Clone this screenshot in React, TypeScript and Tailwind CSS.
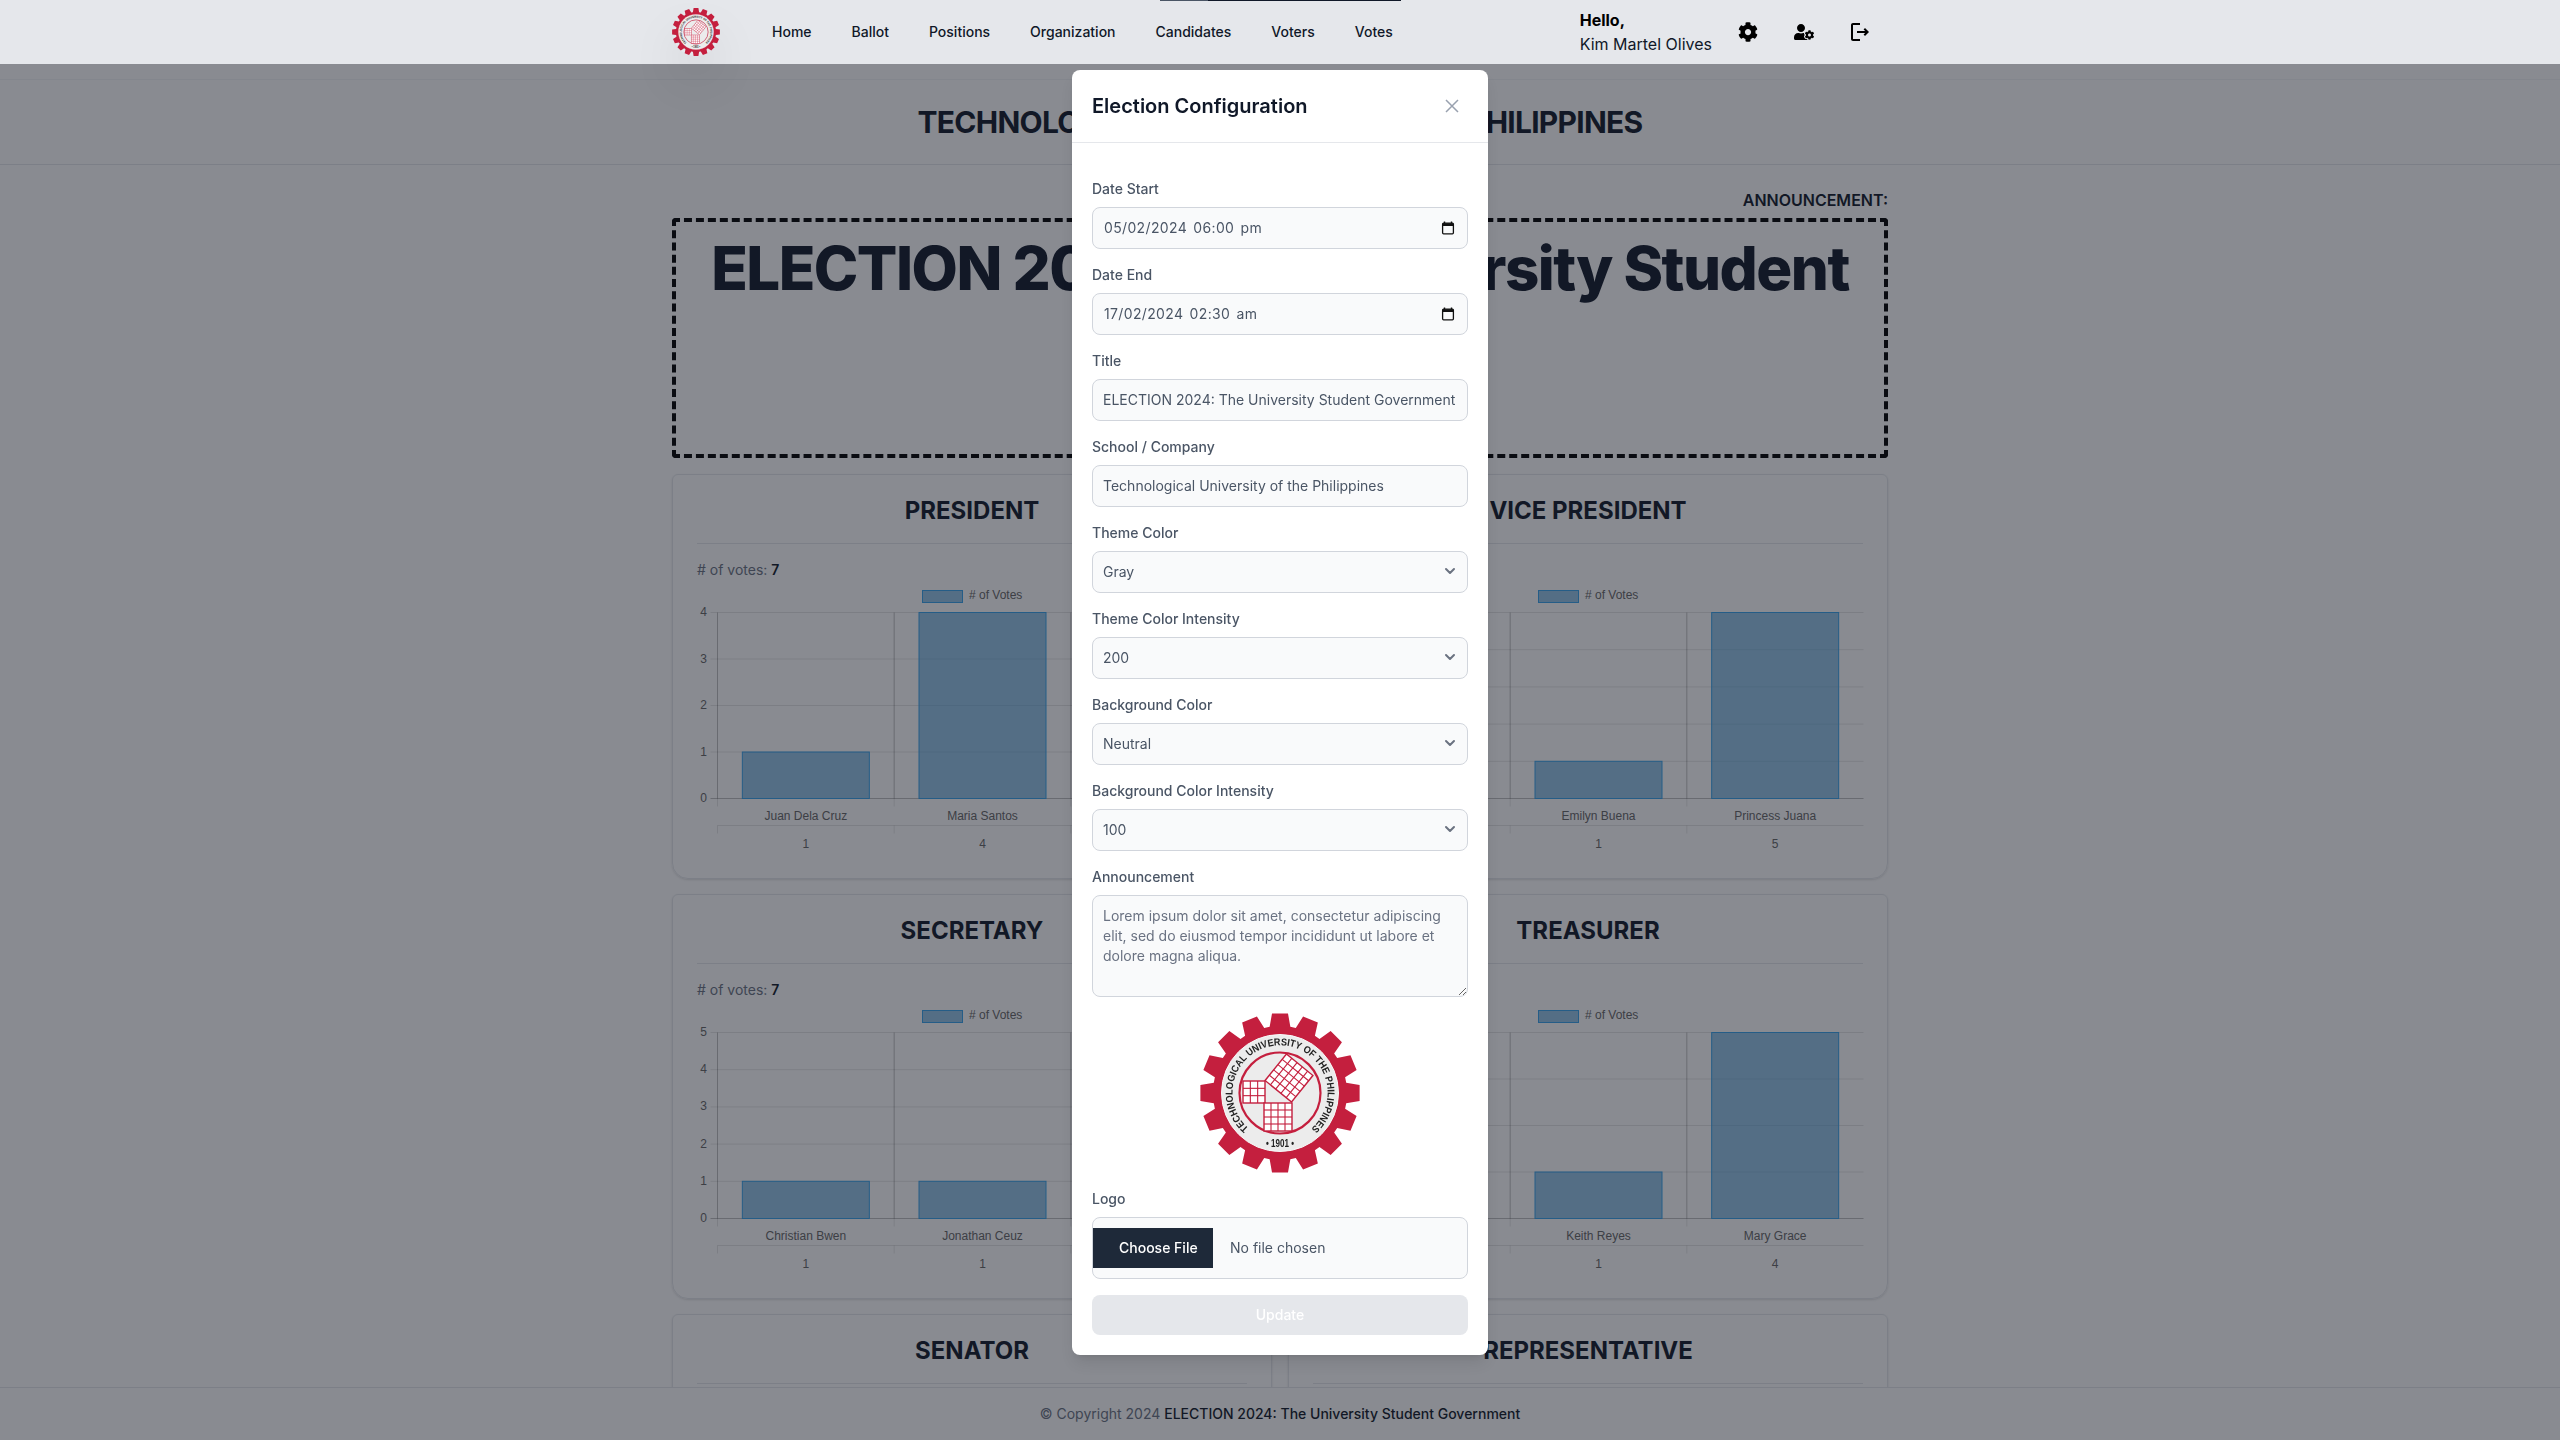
import React from 'react';
import { FaCog, FaUserCog } from 'react-icons/fa';
import { MdOutlineLogout } from 'react-icons/md';

const navLinks = ['Home', 'Ballot', 'Positions', 'Organization', 'Candidates', 'Voters', 'Votes'];

const gearPoints = () => {
  const pts: string[] = [];
  for (let i = 0; i < 16; i++) {
    const a = (i * 22.5 - 90) * (Math.PI / 180);
    const offs = [
      [-0.155, 67],
      [-0.1, 80],
      [0.1, 80],
      [0.155, 67],
    ];
    offs.forEach(([d, r]) => {
      pts.push(`${(80 + r * Math.cos(a + d)).toFixed(2)},${(80 + r * Math.sin(a + d)).toFixed(2)}`);
    });
  }
  return pts.join(' ');
};

const GridSquare = ({ x, y, size, cells, transform }: { x: number; y: number; size: number; cells: number; transform?: string }) => {
  const step = size / cells;
  return (
    <g transform={transform} stroke="#c41f3e" strokeWidth="1.1" fill="#fff">
      <rect x={x} y={y} width={size} height={size} strokeWidth="1.4" />
      {Array.from({ length: cells - 1 }).map((_, i) => (
        <g key={i}>
          <line x1={x + step * (i + 1)} y1={y} x2={x + step * (i + 1)} y2={y + size} />
          <line x1={x} y1={y + step * (i + 1)} x2={x + size} y2={y + step * (i + 1)} />
        </g>
      ))}
    </g>
  );
};

const Logo = ({ id, className }: { id: string; className: string }) => (
  <svg viewBox="0 0 160 160" className={className}>
    <polygon points={gearPoints()} fill="#c41f3e" />
    <circle cx="80" cy="80" r="58.5" fill="#ececec" stroke="#f8f8f8" strokeWidth="1" />
    <circle cx="80" cy="80" r="40.5" fill="#ececec" stroke="#c41f3e" strokeWidth="2.2" />
    <GridSquare x={43} y={68} size={22} cells={3} />
    <GridSquare x={64} y={90} size={28} cells={4} />
    <GridSquare x={72} y={48} size={34} cells={5} transform="rotate(39 89 65)" />
    <defs>
      <path id={id} d="M48.8 115.5 A47.5 47.5 0 1 1 109.5 117" />
    </defs>
    <text className="font-['Liberation_Sans',sans-serif]" fontSize="10" fontWeight="700" fill="#222">
      <textPath href={`#${id}`} textLength="230" lengthAdjust="spacingAndGlyphs">
        TECHNOLOGICAL UNIVERSITY OF THE PHILIPPINES
      </textPath>
    </text>
    <text x="80" y="134" textAnchor="middle" textLength="28" lengthAdjust="spacingAndGlyphs" className="font-['Liberation_Sans',sans-serif]" fontSize="10" fontWeight="700" fill="#222">
      • 1901 •
    </text>
  </svg>
);

type Bar = { name: string; votes: number; col: number };

const VoteChart = ({ max, bars }: { max: number; bars: Bar[] }) => {
  const x0 = 20.5;
  const colW = 176.67;
  const top = 26.5;
  const bottom = 212.5;
  const right = 550.5;
  const rowH = (bottom - top) / max;
  const barW = 127;
  return (
    <svg width="552" height="270" className="mt-1.5 block overflow-visible font-['Liberation_Sans',sans-serif]">
      <rect x="225.5" y="4.5" width="40" height="12" fill="rgba(60,150,210,0.55)" stroke="rgb(54,162,235)" />
      <text x="272" y="13" fontSize="12" fill="#666">
        # of Votes
      </text>
      {Array.from({ length: max + 1 }).map((_, i) => {
        const y = bottom - rowH * i;
        return (
          <g key={i}>
            <line x1={x0 - 7} x2={right} y1={y} y2={y} stroke={i === 0 ? 'rgba(0,0,0,0.25)' : 'rgba(0,0,0,0.1)'} />
            <text x="10" y={y + 3.5} fontSize="12" fill="#666" textAnchor="end">
              {i}
            </text>
          </g>
        );
      })}
      {[0, 1, 2].map((c) => (
        <g key={c}>
          <line x1={x0 + colW * c} x2={x0 + colW * c} y1={top} y2={bottom} stroke="rgba(0,0,0,0.25)" />
          <line x1={x0 + colW * c} x2={x0 + colW * c} y1={bottom} y2={bottom + 8} stroke="rgba(0,0,0,0.1)" />
          <line x1={x0 + colW * c} x2={x0 + colW * c} y1={bottom + 27} y2={bottom + 35} stroke="rgba(0,0,0,0.1)" />
        </g>
      ))}
      <line x1={x0} x2={right} y1={bottom + 27} y2={bottom + 27} stroke="rgba(0,0,0,0.1)" />
      {bars.map((b) => {
        const cx = x0 + colW * b.col + colW / 2;
        const h = rowH * b.votes;
        return (
          <g key={b.name}>
            <rect x={cx - barW / 2} y={bottom - h} width={barW} height={h} fill="rgba(60,150,210,0.55)" stroke="rgb(54,162,235)" />
            <text x={cx} y={bottom + 21} fontSize="12" fill="#666" textAnchor="middle">
              {b.name}
            </text>
            <text x={cx} y={bottom + 49} fontSize="12" fill="#666" textAnchor="middle">
              {b.votes}
            </text>
          </g>
        );
      })}
    </svg>
  );
};

const PositionCard = ({ title, max, bars, side }: { title: string; max?: number; bars?: Bar[]; side: 'left' | 'right' }) => (
  <div className="h-[405px] rounded-t-md rounded-b-2xl border border-gray-200 px-6 pt-5 shadow-sm">
    <div className="border-b border-gray-200 pb-4 text-center">
      <h3 className="text-2xl font-bold text-gray-900">{title}</h3>
    </div>
    {bars && (
      <>
        <p className={`mt-4 text-sm text-gray-500 ${side === 'right' ? 'invisible' : ''}`}>
          # of votes: <span className="font-semibold text-gray-900">7</span>
        </p>
        <VoteChart max={max ?? 4} bars={bars} />
      </>
    )}
  </div>
);

const Label = ({ children }: { children: React.ReactNode }) => (
  <label className="mb-2 block text-sm font-medium text-gray-600">{children}</label>
);

const inputCls =
  'h-[42px] w-full rounded-lg border border-gray-300 bg-gray-50 px-2.5 text-sm text-gray-600 outline-none';

const DateField = ({ label, value }: { label: string; value: string }) => (
  <div>
    <Label>{label}</Label>
    <div className="relative">
      <input readOnly value={value} className={`${inputCls} pb-px pl-[11px] tracking-[0.35px] [word-spacing:2px]`} />
      <svg viewBox="0 0 14 14" className="absolute top-[14px] right-[13px] h-3.5 w-3.5">
        <path d="M3.5 0.5v2M10.5 0.5v2" stroke="#111" strokeWidth="1.4" />
        <rect x="1.6" y="2.2" width="10.8" height="10.6" rx="1" fill="none" stroke="#111" strokeWidth="1.3" />
        <rect x="1.6" y="2.2" width="10.8" height="2.8" fill="#111" />
      </svg>
    </div>
  </div>
);

const TextField = ({ label, value }: { label: string; value: string }) => (
  <div>
    <Label>{label}</Label>
    <input readOnly value={value} className={`${inputCls} pb-px`} />
  </div>
);

const SelectField = ({ label, value }: { label: string; value: string }) => (
  <div>
    <Label>{label}</Label>
    <div className="relative">
      <select defaultValue={value} className={`${inputCls} appearance-none`}>
        <option>{value}</option>
      </select>
      <svg viewBox="0 0 20 20" className="pointer-events-none absolute top-[10px] right-2 h-5 w-5" fill="none">
        <path d="m6 8 4 4 4-4" stroke="#6b7280" strokeWidth="2" strokeLinecap="round" strokeLinejoin="round" />
      </svg>
    </div>
  </div>
);

const ConfigModal = () => (
  <div className="fixed inset-0 z-40 flex items-start justify-center bg-[#131823]/50 pt-[70px]">
    <div className="w-[416px] rounded-lg bg-white shadow-lg">
      <div className="flex h-[73px] items-center justify-between border-b border-gray-200 px-5">
        <h3 className="text-xl font-semibold text-gray-900">Election Configuration</h3>
        <button className="mr-[9px] text-gray-400">
          <svg viewBox="0 0 14 14" className="h-3.5 w-3.5" fill="none" stroke="currentColor" strokeWidth="1.5">
            <path d="M1 1l12 12M13 1L1 13" />
          </svg>
        </button>
      </div>
      <form className="flex flex-col gap-4 px-5 pt-9 pb-5">
        <DateField label="Date Start" value="05/02/2024 06:00 pm" />
        <DateField label="Date End" value="17/02/2024 02:30 am" />
        <TextField label="Title" value="ELECTION 2024: The University Student Government" />
        <TextField label="School / Company" value="Technological University of the Philippines" />
        <SelectField label="Theme Color" value="Gray" />
        <SelectField label="Theme Color Intensity" value="200" />
        <SelectField label="Background Color" value="Neutral" />
        <SelectField label="Background Color Intensity" value="100" />
        <div>
          <Label>Announcement</Label>
          <textarea
            readOnly
            rows={4}
            className="block w-full rounded-lg border border-gray-300 bg-gray-50 p-2.5 text-sm text-gray-500 outline-none"
            value="Lorem ipsum dolor sit amet, consectetur adipiscing elit, sed do eiusmod tempor incididunt ut labore et dolore magna aliqua."
          />
        </div>
        <div className="flex justify-center">
          <Logo id="logo-modal" className="h-40 w-40" />
        </div>
        <div>
          <Label>Logo</Label>
          <div className="flex h-[62px] items-center gap-[17px] rounded-lg border border-gray-300 bg-gray-50 text-sm">
            <span className="flex h-10 w-[120px] items-center bg-gray-800 pl-[26px] font-medium text-white">Choose File</span>
            <span className="text-gray-600">No file chosen</span>
          </div>
        </div>
        <button type="button" className="h-10 rounded-lg bg-gray-200 text-sm font-medium text-white">
          Update
        </button>
      </form>
    </div>
  </div>
);

export default function App() {
  return (
    <div className="flex h-screen flex-col overflow-hidden bg-white font-[Inter,sans-serif] text-gray-900">
      <header className="relative z-50 h-16 shrink-0 bg-gray-200">
        <div className="absolute top-0 left-[1160px] flex h-px w-[241px] bg-gray-900">
          <div className="w-12 bg-gray-600" />
        </div>
        <div className="mx-auto flex h-full w-[1216px] items-center justify-between">
          <div className="flex items-center">
            <div className="rounded-full shadow-2xl">
              <Logo id="logo-nav" className="h-12 w-12" />
            </div>
            <nav className="ml-8 flex text-sm font-medium">
              {navLinks.map((link) => (
                <a key={link} className="px-5 text-gray-900">
                  {link}
                </a>
              ))}
            </nav>
          </div>
          <div className="flex items-center">
            <div className="mr-2 text-base leading-6">
              <p className="font-bold text-black">Hello,</p>
              <p className="text-gray-900">Kim Martel Olives</p>
            </div>
            <span className="flex w-14 justify-center text-black">
              <FaCog size={20} />
            </span>
            <span className="flex w-14 justify-center text-black">
              <FaUserCog size={20} />
            </span>
            <span className="flex w-14 justify-center text-black">
              <MdOutlineLogout size={24} />
            </span>
          </div>
        </div>
      </header>

      <main className="min-h-0 flex-1 overflow-hidden">
        <div className="mt-[15px] border-y border-gray-200 border-t-gray-100 py-6 text-center">
          <h1 className="text-3xl font-bold tracking-tight text-gray-900">TECHNOLOGICAL UNIVERSITY OF THE PHILIPPINES</h1>
        </div>
        <div className="mx-auto w-[1216px]">
          <p className="mt-[23px] mb-1.5 text-right text-base font-semibold text-gray-900">ANNOUNCEMENT:</p>
          <div className="h-[240px] rounded border-4 border-dashed border-black p-4 text-center">
            <h2 className="text-6xl font-extrabold tracking-tight text-gray-900">ELECTION 2024: The University Student Government</h2>
          </div>
          <div className="mt-4 grid grid-cols-2 gap-x-4 gap-y-[15px]">
            <PositionCard
              side="left"
              title="PRESIDENT"
              max={4}
              bars={[
                { name: 'Juan Dela Cruz', votes: 1, col: 0 },
                { name: 'Maria Santos', votes: 4, col: 1 },
              ]}
            />
            <PositionCard
              side="right"
              title="VICE PRESIDENT"
              max={5}
              bars={[
                { name: 'Emilyn Buena', votes: 1, col: 1 },
                { name: 'Princess Juana', votes: 5, col: 2 },
              ]}
            />
            <PositionCard
              side="left"
              title="SECRETARY"
              max={5}
              bars={[
                { name: 'Christian Bwen', votes: 1, col: 0 },
                { name: 'Jonathan Ceuz', votes: 1, col: 1 },
              ]}
            />
            <PositionCard
              side="right"
              title="TREASURER"
              max={4}
              bars={[
                { name: 'Keith Reyes', votes: 1, col: 1 },
                { name: 'Mary Grace', votes: 4, col: 2 },
              ]}
            />
            <PositionCard side="left" title="SENATOR" />
            <PositionCard side="right" title="REPRESENTATIVE" />
          </div>
        </div>
      </main>

      <footer className="h-[53px] shrink-0 border-t border-gray-200 bg-white text-center text-sm leading-[52px] text-gray-500">
        © Copyright 2024 <span className="font-medium text-gray-900">ELECTION 2024: The University Student Government</span>
      </footer>

      <ConfigModal />
    </div>
  );
}
